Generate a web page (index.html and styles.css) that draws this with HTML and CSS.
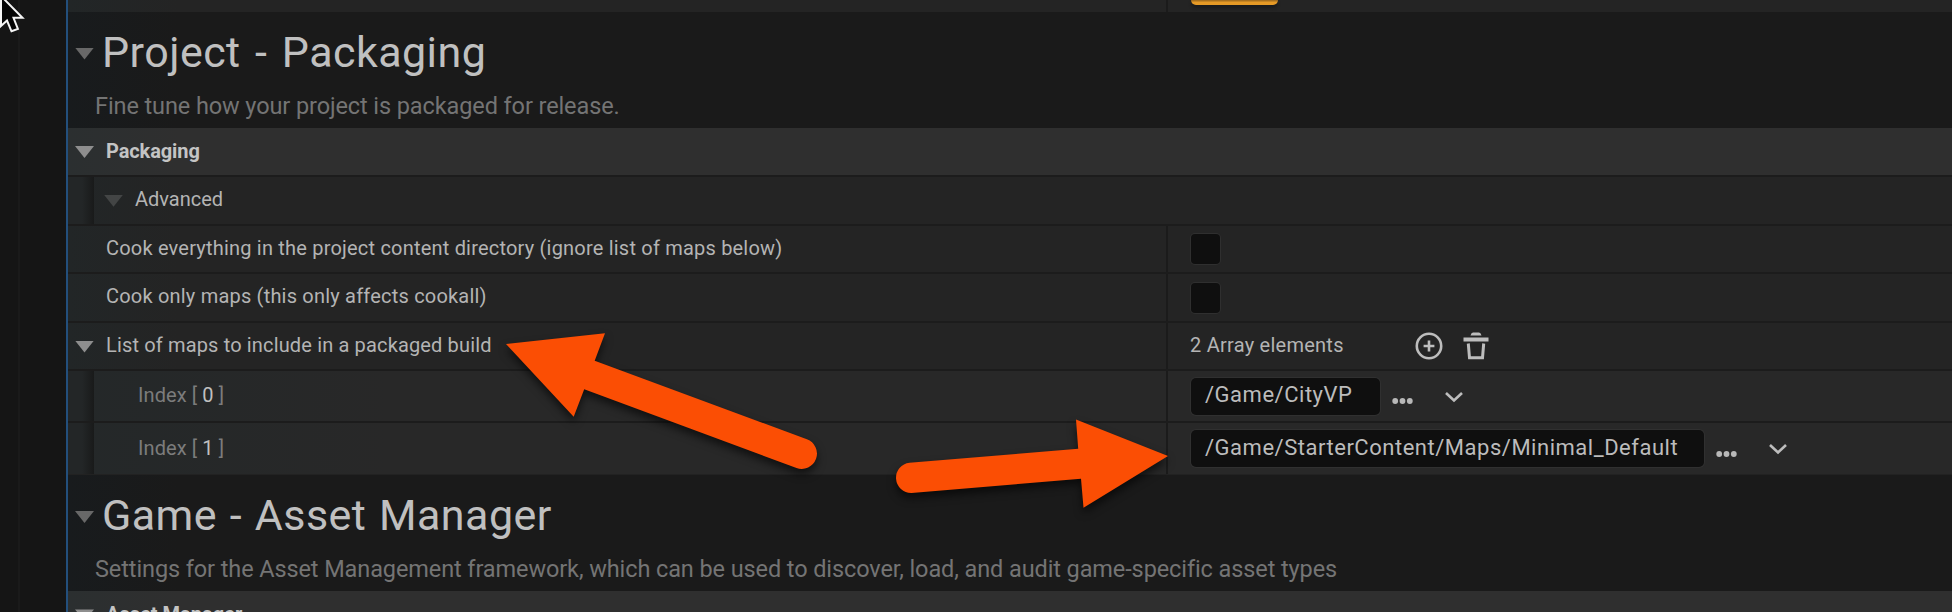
FILE: index.html
```
<!DOCTYPE html>
<html lang="en">
<head>
<meta charset="utf-8">
<title>Project Settings</title>
<link rel="stylesheet" href="styles.css">
</head>
<body>
<div class="window">
  <aside class="sidebar"><div class="sidebar-edge"></div></aside>
  <main class="panel">
    <div class="row row-cut"><div class="name"></div><div class="value"><span class="highlight"></span></div></div>

    <section class="section">
      <h1 class="title title-project"><i class="tri tri-mid"></i><span>Project - Packaging</span></h1>
      <p class="subtitle subtitle-project">Fine tune how your project is packaged for release.</p>
    </section>

    <div class="row category"><i class="tri"></i><span class="t-packaging">Packaging</span></div>
    <div class="row"><div class="indent"></div><div class="advanced"><i class="tri tri-dark"></i><span class="t-advanced">Advanced</span></div></div>
    <div class="row"><div class="name"><span class="label t-cook">Cook everything in the project content directory (ignore list of maps below)</span></div><div class="value"><span class="checkbox"></span></div></div>
    <div class="row"><div class="name"><span class="label t-cook">Cook only maps (this only affects cookall)</span></div><div class="value"><span class="checkbox"></span></div></div>
    <div class="row row-list"><div class="name"><i class="tri"></i><span class="t-list">List of maps to include in a packaged build</span></div>
      <div class="value"><span class="count">2 Array elements</span>
        <svg class="add" width="28" height="28" viewBox="0 0 28 28"><circle cx="14" cy="14" r="12.2"/><path d="M14 8.6v10.8M8.6 14h10.8"/></svg>
        <svg class="trash" width="26" height="28" viewBox="0 0 26 28"><path class="fill" d="M7.5 3.6Q8.3 .6 10 .6h6q1.700 0 2.500 3zM.5 5.500h25v4H.5z"/><path d="M5.300 11.500l1.200 14.300h13l1.200-14.300"/></svg>
      </div></div>
    <div class="row row-item"><div class="indent"></div><div class="name item"><span class="t-index">Index [ <b>0</b> ]</span></div>
      <div class="value"><span class="field field-short"><span class="t-city">/Game/CityVP</span></span>
        <svg class="dots" width="21" height="8" viewBox="0 0 21 8"><circle cx="3.200" cy="4" r="2.900"/><circle cx="10.500" cy="4" r="2.900"/><circle cx="17.800" cy="4" r="2.900"/></svg>
        <svg class="chevron" width="20" height="12" viewBox="0 0 20 12"><path d="M2 2l8 7.500L18 2"/></svg>
      </div></div>
    <div class="row row-item row-last"><div class="indent"></div><div class="name item"><span class="t-index">Index [ <b>1</b> ]</span></div>
      <div class="value"><span class="field field-long"><span class="t-starter">/Game/StarterContent/Maps/Minimal_Default</span></span>
        <svg class="dots" width="21" height="8" viewBox="0 0 21 8"><circle cx="3.200" cy="4" r="2.900"/><circle cx="10.500" cy="4" r="2.900"/><circle cx="17.800" cy="4" r="2.900"/></svg>
        <svg class="chevron" width="20" height="12" viewBox="0 0 20 12"><path d="M2 2l8 7.500L18 2"/></svg>
      </div></div>

    <section class="section section-asset">
      <h1 class="title title-asset"><i class="tri tri-mid"></i><span>Game - Asset Manager</span></h1>
      <p class="subtitle subtitle-asset">Settings for the Asset Management framework, which can be used to discover, load, and audit game-specific asset types</p>
    </section>
    <div class="row category"><i class="tri"></i><span class="t-asset">Asset Manager</span></div>
  </main>
</div>

<!-- Callout arrows and mouse pointer above the panel -->
<svg class="overlay" width="1952" height="612" viewBox="0 0 1952 612">
  <g class="arrows">
    <path d="M506 344L605 333.300 594.700 360.700 806.900 439.300A15 15 0 0 1 796.500 468L584.200 389.300 573.700 416.700z"/>
    <path d="M1168 456L1076 419.500 1078.200 448.800 909.500 462.700A15.200 15.200 0 0 0 911.500 493L1081 478.700 1083.500 507.800z"/>
  </g>
  <path class="pointer" d="M1-4V26L7 20.500 11.500 31.300 17.900 28.900 13.500 17.800H22.500z"/>
</svg>
</body>
</html>
```
FILE: styles.css
```
* { box-sizing: border-box; }
body { margin: 0; background: #1a1a1a; font-family: Roboto, "Liberation Sans", sans-serif; color: #b4b4b4; overflow: hidden; }
.window { display: flex; width: 1952px; height: 612px; overflow: hidden; }
.sidebar { flex: 0 0 66px; background: #151515; }
.sidebar-edge { width: 20px; height: 612px; border-right: 2px solid #1a1a1a; }
.panel { flex: 1; min-width: 0; border-left: 2px solid #234f7c; background: linear-gradient(90deg, #181b1d 0, #1a1a1a 110px); }

.row { display: flex; height: 48.600px; background: linear-gradient(90deg, #222627 0, #242424 110px); border-bottom: 2px solid #1c1c1c; font-size: 20px; white-space: nowrap; }
.row-cut { height: 12px; border-bottom: 0; }
.row-item { height: 52px; background: linear-gradient(90deg, #242829 0, #282828 320px); }
.row-last { border-bottom: 1px solid #222; }
.category { height: 49px; align-items: center; padding: 0 0 2px 7px; background: linear-gradient(90deg, #2b2f30 0, #2f2f2f 110px); font-weight: 700; color: #c4c4c4; }
.t-packaging { letter-spacing: -.1px; }
.name { display: flex; align-items: center; width: 1100px; padding: 0 0 2px 7px; border-right: 2px solid #1b1b1b; }
.label { margin-left: 31px; }
.t-cook { letter-spacing: .2px; }
.t-list { letter-spacing: .150px; }
.value { display: flex; align-items: center; padding-left: 23px; }
.indent { width: 26px; background: linear-gradient(90deg, #232627 14px, #191a1a 26px); }
.advanced { display: flex; align-items: center; padding: 0 0 2px 10px; }
.item { width: 1074px; padding-left: 44px; letter-spacing: .1px; color: #7c7c7c; }
.item b { font-weight: 400; color: #c0c0c0; }

.tri { flex: none; width: 19px; height: 12px; margin: 3px 12px 0 0; background: #8e8e8e; clip-path: polygon(0 0, 100% 0, 50% 100%); }
.tri-mid { background: #686868; }
.tri-dark { background: #434545; }

.section { height: 116px; overflow: hidden; }
.title { display: flex; align-items: center; height: 50px; margin: 15px 0 0; padding-left: 7px; font-size: 43px; font-weight: 400; line-height: 50px; letter-spacing: .450px; word-spacing: 3.300px; color: #c0c0c0; white-space: nowrap; }
.title-asset { word-spacing: 1.600px; }
.title .tri { margin-right: 8px; }
.subtitle { margin: 15px 0 0; padding-left: 27px; font-size: 23.500px; line-height: 28px; letter-spacing: -.1px; color: #747474; white-space: nowrap; }

.checkbox { width: 29px; height: 30px; margin-top: 1px; border-radius: 4px; background: #0f0f0f; box-shadow: 0 0 0 1px #2f2f2f; }
.highlight { align-self: flex-start; width: 87px; height: 5px; border-radius: 0 0 5px 5px; background: linear-gradient(#a8701e 1px, #e69a26 2px); box-shadow: 0 3px 3px #1b1b1b; }
.count { width: 225px; margin-left: -1px; padding-bottom: 2px; letter-spacing: .250px; }
.field { display: flex; align-items: center; height: 37px; padding: 0 0 3px 14px; border-radius: 5px; background: #0f0f0f; box-shadow: 0 0 0 1px #303030; font-size: 22px; letter-spacing: .520px; color: #bcbcbc; }
.field-short { width: 189px; }
.field-long { width: 513px; }
.add, .chevron { fill: none; stroke: #bdbdbd; stroke-width: 2.600; }
.trash { margin-left: 20px; fill: none; stroke: #bdbdbd; stroke-width: 3; }
.trash .fill { fill: #bdbdbd; stroke: none; }
.dots { margin: 10px 0 0 12px; fill: #b8b8b8; }
.chevron { margin: 1px 0 0 31px; }

.overlay { position: absolute; left: 0; top: 0; }
.arrows { fill: #fb4e04; filter: drop-shadow(0 5px 4px rgba(0, 0, 0, .6)); }
.pointer { fill: #050505; stroke: #f5f5f5; stroke-width: 2; }
```
